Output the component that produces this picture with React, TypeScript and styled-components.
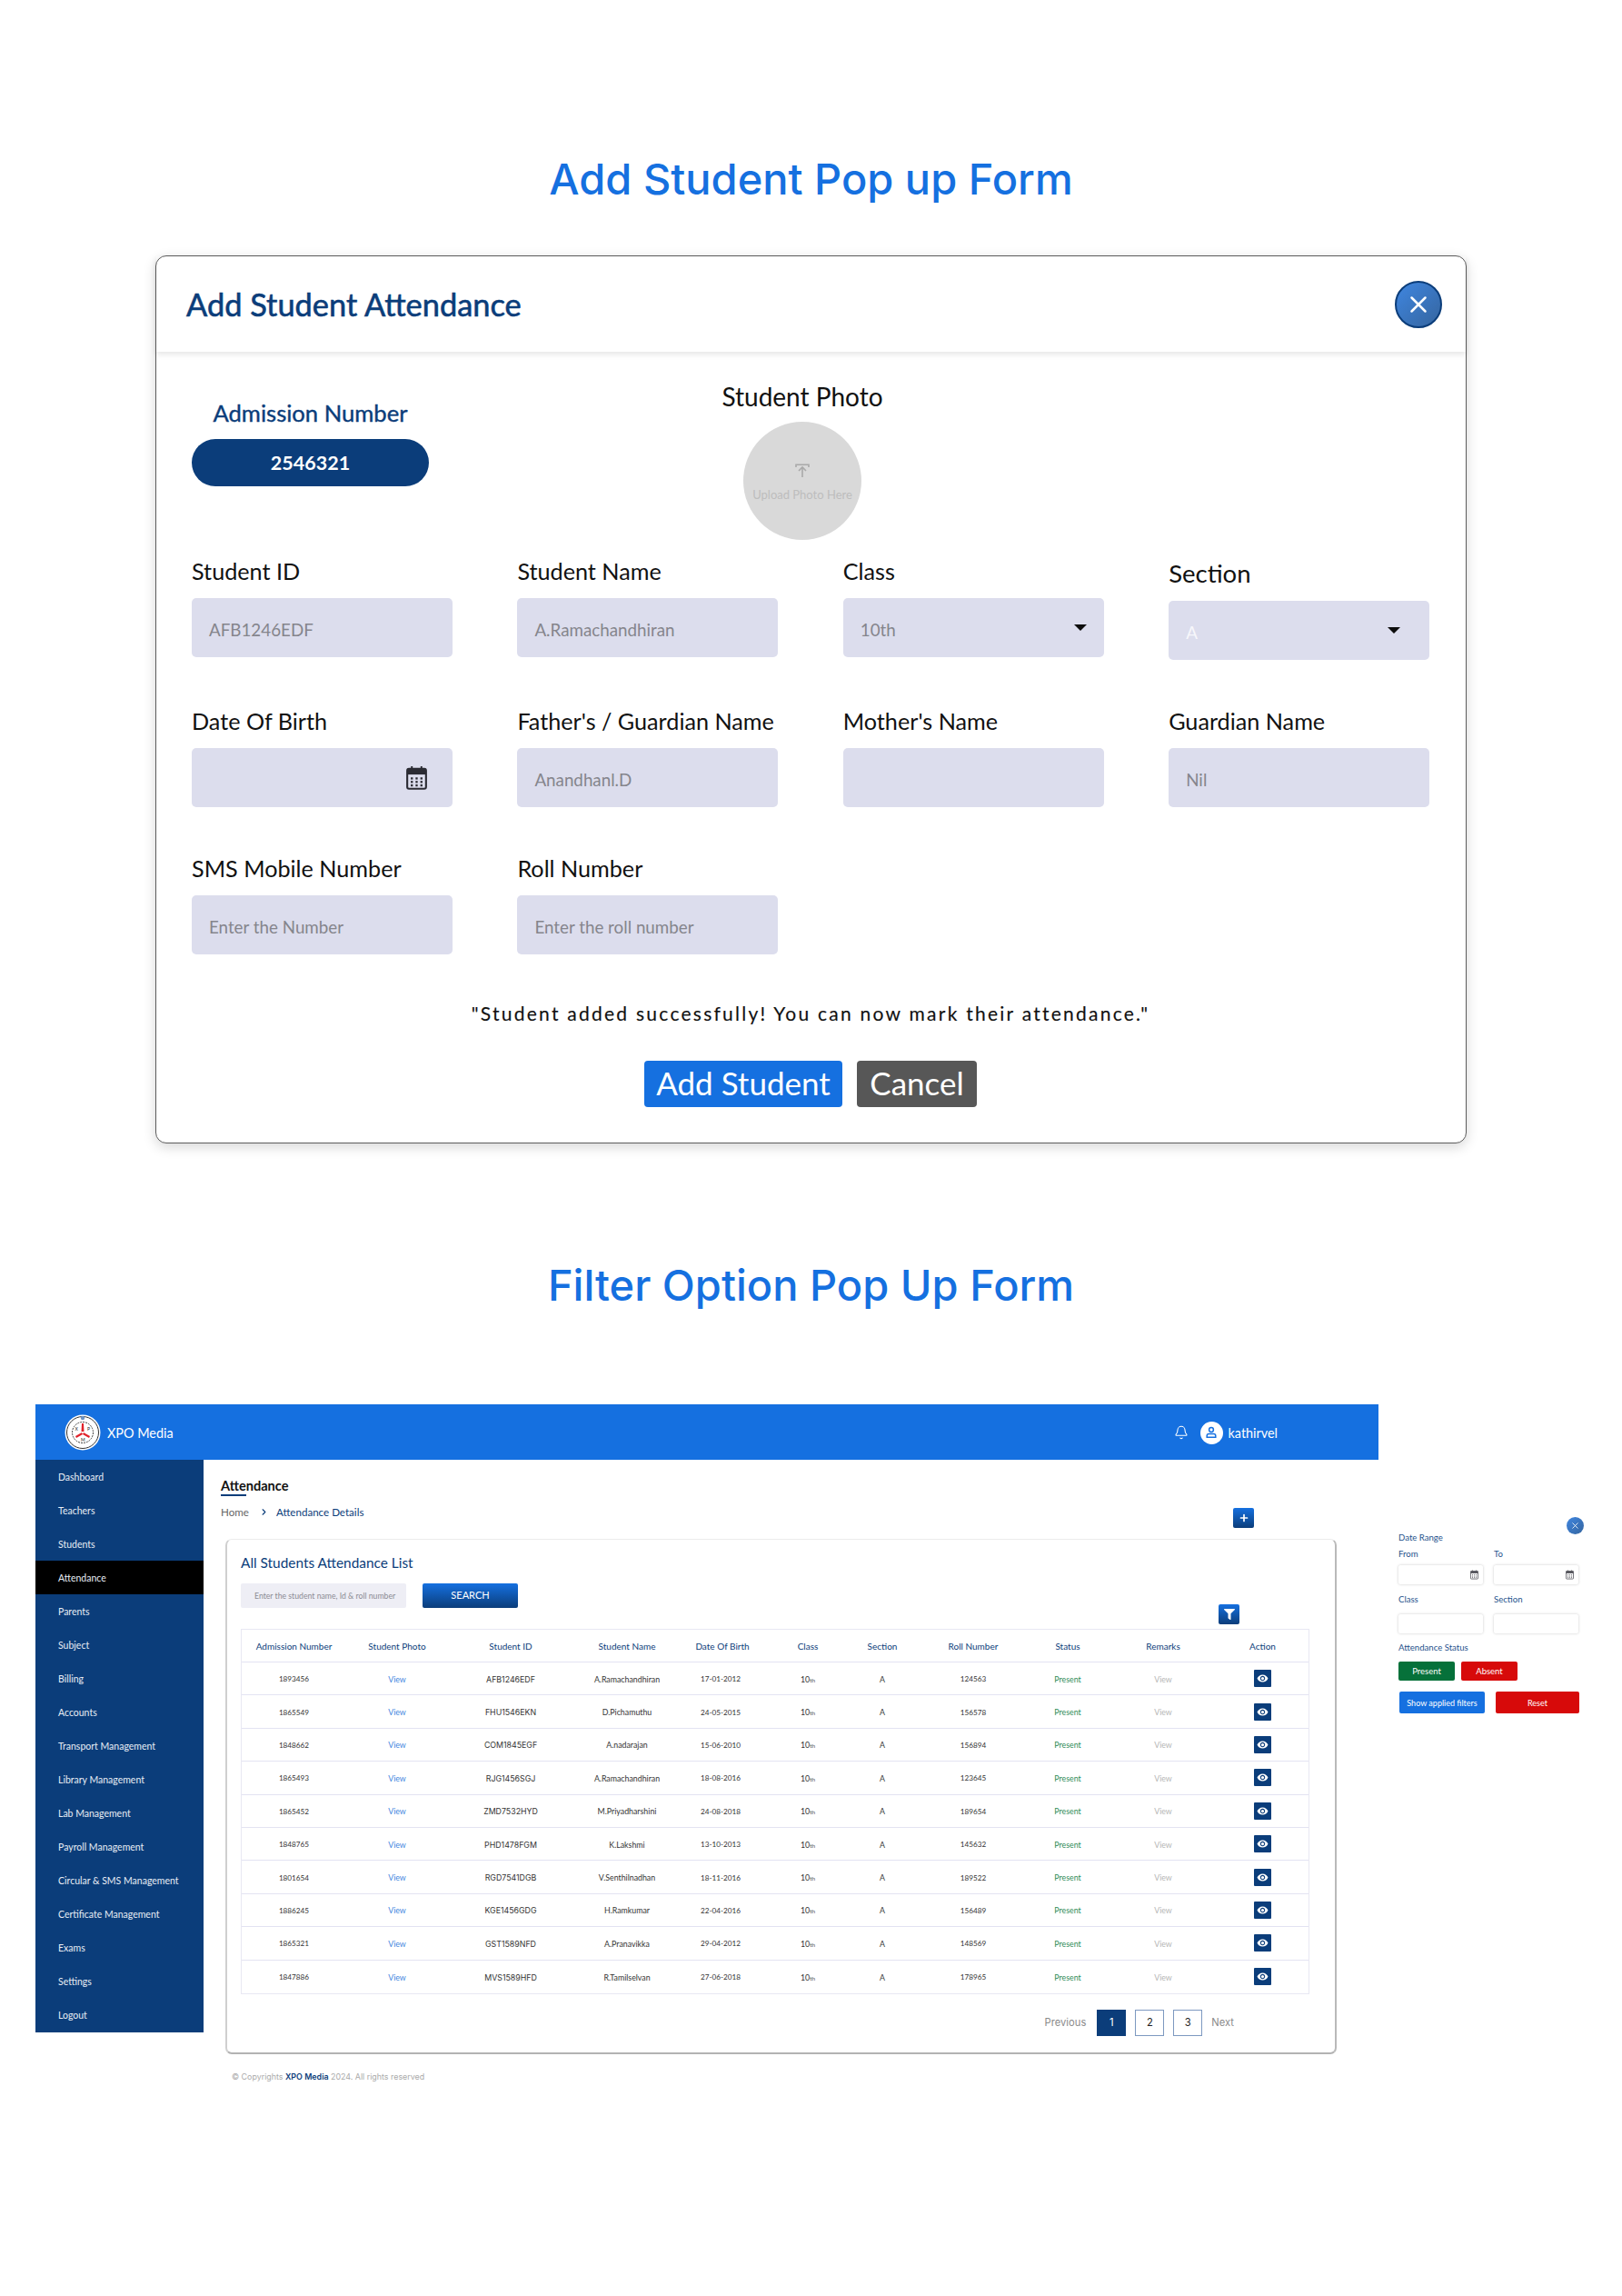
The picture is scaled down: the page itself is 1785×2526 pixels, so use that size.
import React from 'react';
import styled, { createGlobalStyle } from 'styled-components';
import { Bell, ChevronRight, Plus, X } from 'lucide-react';
import { FaFilter } from 'react-icons/fa';
import { MdRemoveRedEye } from 'react-icons/md';

const navy = '#0b3d7a';
const blue = '#1570e0';
const soft = '"Lato", "Open Sans", sans-serif';
const geo = '"Inter", "Open Sans", sans-serif';

const GlobalStyle = createGlobalStyle`
	html, body {
		margin: 0;
		background: #fff;
	}
	* {
		box-sizing: border-box;
	}
`;

const Page = styled.div`
	width: 1785px;
	min-height: 2526px;
	padding-top: 167px;
	font-family: ${soft};
	overflow: hidden;
`;

const SectionTitle = styled.h1<{ $mt?: number }>`
	margin: ${(p) => p.$mt ?? 0}px 0 0;
	height: 60px;
	line-height: 60px;
	text-align: center;
	font-family: ${geo};
	font-size: 47px;
	font-weight: 500;
	color: ${blue};
`;

/* add student modal */
const Modal = styled.section`
	width: 1443px;
	height: 977px;
	margin: 54px 0 0 171px;
	background: #fff;
	border: 1px solid #5c5c5c;
	border-radius: 12px;
	box-shadow: 0 4px 14px rgba(0, 0, 0, 0.16);
`;

const ModalHeader = styled.header`
	height: 105px;
	padding: 0 26px 0 33px;
	display: flex;
	align-items: center;
	justify-content: space-between;
	box-shadow: 0 3px 6px rgba(0, 0, 0, 0.1);
`;

const ModalTitle = styled.h2`
	margin: 0;
	font-size: 34.4px;
	font-weight: 400;
	-webkit-text-stroke: 0.6px ${navy};
	color: ${navy};
`;

const CloseCircle = styled.button<{ $small?: boolean }>`
	width: ${(p) => (p.$small ? 19 : 52)}px;
	height: ${(p) => (p.$small ? 19 : 52)}px;
	padding: 0;
	display: flex;
	align-items: center;
	justify-content: center;
	border-radius: 50%;
	border: ${(p) => (p.$small ? 0 : 2)}px solid ${navy};
	background: linear-gradient(135deg, #3f86e0, #35659f);
	color: #fff;
`;

const ModalBody = styled.div`
	padding: 34px 40px 0 39px;
`;

const TopRow = styled.div`
	display: flex;
	height: 173px;
`;

const AdmissionBlock = styled.div`
	width: 261px;
	padding-top: 17px;
`;

const AdmissionLabel = styled.div`
	height: 32px;
	line-height: 32px;
	text-align: center;
	font-size: 25.6px;
	-webkit-text-stroke: 0.4px ${navy};
	color: ${navy};
`;

const AdmissionPill = styled.div`
	margin-top: 13px;
	height: 52px;
	display: flex;
	align-items: center;
	justify-content: center;
	border-radius: 26px;
	background: ${navy};
	color: #fff;
	font-size: 21.5px;
	font-weight: 700;
`;

const PhotoBlock = styled.div`
	width: 220px;
	margin-left: 301px;
	display: flex;
	flex-direction: column;
	align-items: center;
`;

const PhotoLabel = styled.div`
	height: 32px;
	line-height: 30px;
	font-size: 28px;
	color: #111;
`;

const PhotoCircle = styled.div`
	width: 130px;
	height: 130px;
	margin-top: 11px;
	padding-top: 46px;
	border-radius: 50%;
	background: #d9d9d9;
	display: flex;
	flex-direction: column;
	align-items: center;
	color: #bdbdbd;
	font-size: 13px;
	white-space: nowrap;
`;

const UploadCaption = styled.span`
	margin-top: 10px;
	line-height: 16px;
`;

const FormRow = styled.div<{ $mt?: number }>`
	display: grid;
	grid-template-columns: repeat(4, 287px);
	column-gap: 71.4px;
	margin-top: ${(p) => p.$mt ?? 53}px;
`;

const FieldLabel = styled.label<{ $large?: boolean }>`
	display: block;
	height: ${(p) => (p.$large ? 33 : 30)}px;
	line-height: ${(p) => (p.$large ? 34 : 28)}px;
	margin-bottom: 14px;
	font-size: ${(p) => (p.$large ? 27.5 : 25.2)}px;
	color: #111;
	white-space: nowrap;
`;

const FieldBox = styled.div<{ $light?: boolean; $caretGap?: number }>`
	height: 65px;
	padding: 3px ${(p) => p.$caretGap ?? 19}px 0 19px;
	display: flex;
	align-items: center;
	justify-content: space-between;
	border-radius: 5px;
	background: #dcdded;
	color: ${(p) => (p.$light ? '#f7f7fb' : '#85858c')};
	font-size: 18.8px;
`;

const Caret = styled.span`
	width: 0;
	height: 0;
	margin: -3px 0 0;
	border-left: 7px solid transparent;
	border-right: 7px solid transparent;
	border-top: 7px solid #0d0d0d;
`;

const CalendarSlot = styled.span`
	margin: -3px 9px 0 auto;
	display: flex;
`;

const Message = styled.p`
	margin: 51px 0 0;
	height: 30px;
	line-height: 28px;
	text-align: center;
	font-size: 21px;
	font-weight: 400;
	letter-spacing: 2.25px;
	-webkit-text-stroke: 0.15px #111;
	color: #111;
`;

const ButtonRow = styled.div`
	margin-top: 36px;
	display: flex;
	justify-content: center;
	gap: 16px;
`;

const BigButton = styled.button<{ $width: number; $bg: string }>`
	width: ${(p) => p.$width}px;
	height: 51px;
	padding: 0 0 3px;
	border: 0;
	border-radius: 4px;
	background: ${(p) => p.$bg};
	color: #fff;
	font-family: ${soft};
	font-size: 35px;
`;

/* attendance app shot */
const Shot = styled.div`
	display: flex;
	margin: 101px 0 0 39px;
`;

const AppFrame = styled.div`
	width: 1478px;
	flex: none;
`;

const TopBar = styled.div`
	height: 61px;
	padding: 1px 0 0 32px;
	display: flex;
	align-items: center;
	background: ${blue};
	color: #fff;
`;

const BrandName = styled.span`
	margin-left: 7px;
	font-size: 14.4px;
`;

const TopBarRight = styled.div`
	margin-left: auto;
	margin-right: 111px;
	display: flex;
	align-items: center;
`;

const AvatarCircle = styled.span`
	width: 25px;
	height: 25px;
	margin: 0 6px 0 13px;
	border-radius: 50%;
	background: #fff;
	display: flex;
	align-items: center;
	justify-content: center;
`;

const UserName = styled.span`
	font-size: 14.4px;
`;

const AppBody = styled.div`
	display: flex;
	align-items: flex-start;
`;

const Sidebar = styled.nav`
	width: 185px;
	flex: none;
	padding-bottom: 1px;
	background: ${navy};
`;

const NavItem = styled.div<{ $active?: boolean }>`
	height: 37px;
	padding-left: 25px;
	display: flex;
	align-items: center;
	background: ${(p) => (p.$active ? '#000' : 'transparent')};
	color: #e8edf5;
	font-size: 10.5px;
	white-space: nowrap;
`;

const Main = styled.main`
	flex: 1;
	padding: 20px 0 0 19px;
`;

const PageHead = styled.div`
	display: flex;
	justify-content: space-between;
	padding-right: 137px;
`;

const PageHeading = styled.h3`
	margin: 0;
	height: 18px;
	line-height: 18px;
	font-size: 14.6px;
	font-weight: 700;
	color: #111;
`;

const HeadingMark = styled.div`
	width: 28px;
	height: 2px;
	background: ${navy};
`;

const Breadcrumb = styled.div`
	margin-top: 10px;
	height: 14px;
	display: flex;
	align-items: center;
	font-size: 11.6px;
	color: #666;
`;

const CrumbLink = styled.span`
	color: ${navy};
`;

const CrumbArrow = styled.span`
	display: flex;
	margin: 0 8px 0 11px;
	color: ${navy};
`;

const SquareButton = styled.button<{ $mt?: number }>`
	width: 23px;
	height: 22px;
	margin-top: ${(p) => p.$mt ?? 0}px;
	padding: 0;
	display: flex;
	align-items: center;
	justify-content: center;
	border: 0;
	border-radius: 2px;
	background: linear-gradient(180deg, ${blue}, ${navy});
	color: #fff;
`;

const Card = styled.section`
	width: 1223px;
	height: 567px;
	margin: 12px 0 0 5px;
	padding: 15px 28px 0 15px;
	background: #fff;
	border: 1px solid #ececec;
	border-right: 2px solid #b9b9b9;
	border-bottom: 2px solid #b3b3b3;
	border-left: 2px solid #cfcfcf;
	border-radius: 7px;
`;

const CardTitle = styled.h4`
	margin: 0;
	height: 20px;
	line-height: 20px;
	font-size: 15.4px;
	font-weight: 400;
	color: ${navy};
`;

const Toolbar = styled.div`
	margin-top: 13px;
	height: 45px;
	padding-right: 77px;
	display: flex;
	justify-content: space-between;
	align-items: flex-end;
`;

const SearchGroup = styled.div`
	align-self: flex-start;
	display: flex;
	gap: 18px;
`;

const SearchInput = styled.div`
	width: 182px;
	height: 27px;
	padding-left: 15px;
	display: flex;
	align-items: center;
	border-radius: 2px;
	background: #eeeef5;
	color: #8c8c94;
	font-size: 8.7px;
	white-space: nowrap;
`;

const SearchButton = styled.button`
	width: 105px;
	height: 27px;
	padding: 0 0 2px;
	border: 0;
	border-radius: 2px;
	background: linear-gradient(180deg, ${blue}, ${navy});
	color: #fff;
	font-family: ${soft};
	font-size: 11px;
`;

const Table = styled.div`
	width: 1176px;
	margin-top: 5px;
	border: 1px solid #e8e8f3;
`;

const TableRow = styled.div<{ $head?: boolean }>`
	display: grid;
	grid-template-columns: 115px 112px 138px 118px 92px 96px 68px 132px 76px 134px 85px;
	height: ${(p) => (p.$head ? 36 : 36.4)}px;
	padding-top: ${(p) => (p.$head ? 0 : 1)}px;
	align-items: center;
	border-bottom: 1px solid #e3e3f2;
	&:last-child {
		border-bottom: 0;
	}
`;

const HeadCell = styled.div`
	text-align: center;
	font-size: 10px;
	color: ${navy};
	white-space: nowrap;
`;

const Cell = styled.div<{ $color?: string; $geo?: boolean; $pad?: number; $num?: boolean }>`
	text-align: ${(p) => (p.$pad ? 'left' : 'center')};
	padding-left: ${(p) => p.$pad ?? 0}px;
	font-family: ${(p) => (p.$geo ? geo : soft)};
	font-size: ${(p) => (p.$geo ? 8.8 : p.$num ? 8.2 : 8.8)}px;
	color: ${(p) => p.$color ?? '#333'};
	white-space: nowrap;
`;

const Suffix = styled.span`
	font-size: 6.5px;
	color: #555;
`;

const EyeButton = styled.span`
	width: 19px;
	height: 19px;
	margin: -1px auto 0;
	display: flex;
	align-items: center;
	justify-content: center;
	border-radius: 1px;
	background: ${navy};
	color: #fff;
`;

const Pagination = styled.div`
	margin-top: 17px;
	padding-right: 83px;
	display: flex;
	justify-content: flex-end;
	align-items: center;
	font-family: ${geo};
	font-size: 11.2px;
	color: #8a8a8a;
`;

const PageNumber = styled.span<{ $active?: boolean }>`
	width: 32px;
	height: 29px;
	margin-left: ${(p) => (p.$active ? 12 : 10)}px;
	display: flex;
	align-items: center;
	justify-content: center;
	border: 1px solid ${(p) => (p.$active ? navy : '#7d99c0')};
	background: ${(p) => (p.$active ? navy : '#fff')};
	color: ${(p) => (p.$active ? '#fff' : '#222')};
`;

const NextLabel = styled.span`
	margin-left: 10px;
`;

const Footer = styled.div`
	margin: 18px 0 0 12px;
	height: 14px;
	line-height: 14px;
	font-family: ${geo};
	font-size: 8.9px;
	color: #aaa;
	white-space: nowrap;
`;

const FooterBrand = styled.span`
	font-weight: 600;
	color: ${navy};
`;

/* filter panel */
const FilterPanel = styled.aside`
	width: 199px;
	flex: none;
	margin: 124px 0 0 22px;
	display: flex;
	flex-direction: column;
	font-size: 9.6px;
	line-height: 12px;
	color: #26528c;
`;

const FilterClose = styled.div`
	display: flex;
	justify-content: flex-end;
	margin-right: -5px;
`;

const FilterHeading = styled.div<{ $mt: number; $mb?: number }>`
	height: 12px;
	margin-top: ${(p) => p.$mt}px;
	margin-bottom: ${(p) => p.$mb ?? 0}px;
`;

const FilterGrid = styled.div<{ $mt?: number }>`
	display: grid;
	grid-template-columns: 93px 93px;
	column-gap: 12px;
	margin-top: ${(p) => p.$mt ?? 0}px;
`;

const FilterInput = styled.div<{ $mt?: number }>`
	height: 21px;
	margin-top: ${(p) => p.$mt ?? 6}px;
	padding-right: 5px;
	display: flex;
	align-items: center;
	justify-content: flex-end;
	background: #fff;
	border-radius: 2px;
	box-shadow: 0 0 3px rgba(0, 0, 0, 0.22);
`;

const StatusRow = styled.div`
	display: flex;
	gap: 7px;
`;

const StatusButton = styled.button<{ $bg: string }>`
	width: 62px;
	height: 21px;
	padding: 0;
	border: 0;
	border-radius: 2px;
	background: ${(p) => p.$bg};
	color: #fff;
	font-family: ${soft};
	font-size: 9.5px;
`;

const ActionRow = styled.div`
	display: flex;
	gap: 12px;
	margin: 12px 0 0 1px;
`;

const ActionButton = styled.button<{ $bg: string; $width: number }>`
	width: ${(p) => p.$width}px;
	height: 24px;
	padding: 0;
	border: 0;
	border-radius: 2px;
	background: ${(p) => p.$bg};
	color: #fff;
	font-family: ${soft};
	font-size: 9px;
	white-space: nowrap;
`;

const CalendarIcon: React.FC<{ size: number; color?: string }> = ({ size, color = '#2b2b33' }) => (
	<svg width={size} height={size * 1.17} viewBox="0 0 24 28" fill="none">
		<path d="M6.5 1v4M17.5 1v4" stroke={color} strokeWidth="2" />
		<rect x="1.2" y="4" width="21.6" height="22.8" rx="2" stroke={color} strokeWidth="2.2" />
		<rect x="1.2" y="4" width="21.6" height="6.5" fill={color} />
		{[6.5, 12, 17.5].map((x) =>
			[15, 19, 23].map((y) => <rect key={`${x}-${y}`} x={x - 1.2} y={y - 1.2} width="2.4" height="2.4" fill={color} />)
		)}
	</svg>
);

const UploadIcon = () => (
	<svg width="16" height="16" viewBox="0 0 16 16" fill="none" stroke="#a9a9a9" strokeWidth="1.6">
		<path d="M1 4V1.2h14V4" />
		<path d="M8 15V4.5M4 8l4-4 4 4" />
	</svg>
);

const Seal = () => (
	<svg width="40" height="40" viewBox="0 0 40 40">
		<circle cx="20" cy="20" r="19.5" fill="#fff" />
		<circle cx="20" cy="20" r="17.5" fill="none" stroke="#333" strokeWidth="1" />
		<circle cx="20" cy="20" r="11.5" fill="#fff" stroke="#444" strokeWidth="1" strokeDasharray="2 1" />
		<path d="M19 10h2l.5 9h-3zM21 20l7 4-1 2-7-4zM19 20l-7 4 1 2 7-4z" fill="#e0222a" />
		<circle cx="20" cy="4" r="2.2" fill="#6d93c4" />
		<text x="11.5" y="18" fontSize="5" fontFamily="Lato, sans-serif" fill="#222">X</text>
		<text x="25" y="18" fontSize="5" fontFamily="Lato, sans-serif" fill="#222">P</text>
		<text x="18" y="30" fontSize="5" fontFamily="Lato, sans-serif" fill="#222">M</text>
	</svg>
);

const PersonIcon = () => (
	<svg width="14" height="14" viewBox="0 0 14 14" fill="none" stroke={blue} strokeWidth="1.5">
		<circle cx="7" cy="4" r="2.4" />
		<path d="M2.2 12.2v-1.4c0-1.3 1-2.2 2.2-2.2h5.2c1.2 0 2.2.9 2.2 2.2v1.4z" />
	</svg>
);

const navItems = [
	'Dashboard',
	'Teachers',
	'Students',
	'Attendance',
	'Parents',
	'Subject',
	'Billing',
	'Accounts',
	'Transport Management',
	'Library Management',
	'Lab Management',
	'Payroll Management',
	'Circular & SMS Management',
	'Certificate Management',
	'Exams',
	'Settings',
	'Logout',
];

const columns = [
	'Admission Number',
	'Student Photo',
	'Student ID',
	'Student Name',
	'Date Of Birth',
	'Class',
	'Section',
	'Roll Number',
	'Status',
	'Remarks',
	'Action',
];

const students = [
	['1893456', 'AFB1246EDF', 'A.Ramachandhiran', '17-01-2012', '124563'],
	['1865549', 'FHU1546EKN', 'D.Pichamuthu', '24-05-2015', '156578'],
	['1848662', 'COM1845EGF', 'A.nadarajan', '15-06-2010', '156894'],
	['1865493', 'RJG1456SGJ', 'A.Ramachandhiran', '18-08-2016', '123645'],
	['1865452', 'ZMD7532HYD', 'M.Priyadharshini', '24-08-2018', '189654'],
	['1848765', 'PHD1478FGM', 'K.Lakshmi', '13-10-2013', '145632'],
	['1801654', 'RGD7541DGB', 'V.Senthilnadhan', '18-11-2016', '189522'],
	['1886245', 'KGE1456GDG', 'H.Ramkumar', '22-04-2016', '156489'],
	['1865321', 'GST1589NFD', 'A.Pranavikka', '29-04-2012', '148569'],
	['1847886', 'MVS1589HFD', 'R.Tamilselvan', '27-06-2018', '178965'],
];

const App: React.FC = () => (
	<Page>
		<GlobalStyle />
		<SectionTitle>Add Student Pop up Form</SectionTitle>
		<Modal>
			<ModalHeader>
				<ModalTitle>Add Student Attendance</ModalTitle>
				<CloseCircle>
					<X size={30} strokeWidth={2} />
				</CloseCircle>
			</ModalHeader>
			<ModalBody>
				<TopRow>
					<AdmissionBlock>
						<AdmissionLabel>Admission Number</AdmissionLabel>
						<AdmissionPill>2546321</AdmissionPill>
					</AdmissionBlock>
					<PhotoBlock>
						<PhotoLabel>Student Photo</PhotoLabel>
						<PhotoCircle>
							<UploadIcon />
							<UploadCaption>Upload Photo Here</UploadCaption>
						</PhotoCircle>
					</PhotoBlock>
				</TopRow>
				<FormRow $mt={20}>
					<div>
						<FieldLabel>Student ID</FieldLabel>
						<FieldBox>AFB1246EDF</FieldBox>
					</div>
					<div>
						<FieldLabel>Student Name</FieldLabel>
						<FieldBox>A.Ramachandhiran</FieldBox>
					</div>
					<div>
						<FieldLabel>Class</FieldLabel>
						<FieldBox>
							10th
							<Caret />
						</FieldBox>
					</div>
					<div>
						<FieldLabel $large>Section</FieldLabel>
						<FieldBox $light $caretGap={32}>
							A
							<Caret />
						</FieldBox>
					</div>
				</FormRow>
				<FormRow>
					<div>
						<FieldLabel>Date Of Birth</FieldLabel>
						<FieldBox>
							<CalendarSlot>
								<CalendarIcon size={23} />
							</CalendarSlot>
						</FieldBox>
					</div>
					<div>
						<FieldLabel>Father's / Guardian Name</FieldLabel>
						<FieldBox>Anandhanl.D</FieldBox>
					</div>
					<div>
						<FieldLabel>Mother's Name</FieldLabel>
						<FieldBox />
					</div>
					<div>
						<FieldLabel>Guardian Name</FieldLabel>
						<FieldBox>Nil</FieldBox>
					</div>
				</FormRow>
				<FormRow>
					<div>
						<FieldLabel>SMS Mobile Number</FieldLabel>
						<FieldBox>Enter the Number</FieldBox>
					</div>
					<div>
						<FieldLabel>Roll Number</FieldLabel>
						<FieldBox>Enter the roll number</FieldBox>
					</div>
				</FormRow>
				<Message>"Student added successfully! You can now mark their attendance."</Message>
				<ButtonRow>
					<BigButton $width={218} $bg={blue}>Add Student</BigButton>
					<BigButton $width={132} $bg="#575757">Cancel</BigButton>
				</ButtonRow>
			</ModalBody>
		</Modal>
		<SectionTitle $mt={126}>Filter Option Pop Up Form</SectionTitle>
		<Shot>
			<AppFrame>
				<TopBar>
					<Seal />
					<BrandName>XPO Media</BrandName>
					<TopBarRight>
						<Bell size={16} strokeWidth={1.6} />
						<AvatarCircle>
							<PersonIcon />
						</AvatarCircle>
						<UserName>kathirvel</UserName>
					</TopBarRight>
				</TopBar>
				<AppBody>
					<Sidebar>
						{navItems.map((item) => (
							<NavItem key={item} $active={item === 'Attendance'}>
								{item}
							</NavItem>
						))}
					</Sidebar>
					<Main>
						<PageHead>
							<div>
								<PageHeading>Attendance</PageHeading>
								<HeadingMark />
								<Breadcrumb>
									Home
									<CrumbArrow>
										<ChevronRight size={11} strokeWidth={2.4} />
									</CrumbArrow>
									<CrumbLink>Attendance Details</CrumbLink>
								</Breadcrumb>
							</div>
							<SquareButton $mt={33}>
								<Plus size={12} strokeWidth={3.4} />
							</SquareButton>
						</PageHead>
						<Card>
							<CardTitle>All Students Attendance List</CardTitle>
							<Toolbar>
								<SearchGroup>
									<SearchInput>Enter the student name, Id &amp; roll number</SearchInput>
									<SearchButton>SEARCH</SearchButton>
								</SearchGroup>
								<SquareButton>
									<FaFilter size={12} />
								</SquareButton>
							</Toolbar>
							<Table>
								<TableRow $head>
									{columns.map((col) => (
										<HeadCell key={col}>{col}</HeadCell>
									))}
								</TableRow>
								{students.map(([adm, id, name, dob, roll]) => (
									<TableRow key={adm}>
										<Cell $num>{adm}</Cell>
										<Cell $color="#3f86e0">View</Cell>
										<Cell $geo>{id}</Cell>
										<Cell>{name}</Cell>
										<Cell $pad={22} $num>{dob}</Cell>
										<Cell>
											10<Suffix>th</Suffix>
										</Cell>
										<Cell>A</Cell>
										<Cell $num>{roll}</Cell>
										<Cell $color="#2e8b57">Present</Cell>
										<Cell $color="#b5b5b5">View</Cell>
										<EyeButton>
											<MdRemoveRedEye size={13} />
										</EyeButton>
									</TableRow>
								))}
							</Table>
							<Pagination>
								Previous
								<PageNumber $active>1</PageNumber>
								<PageNumber>2</PageNumber>
								<PageNumber>3</PageNumber>
								<NextLabel>Next</NextLabel>
							</Pagination>
						</Card>
						<Footer>
							© Copyrights <FooterBrand>XPO Media</FooterBrand> 2024. All rights reserved
						</Footer>
					</Main>
				</AppBody>
			</AppFrame>
			<FilterPanel>
				<FilterClose>
					<CloseCircle $small>
						<X size={11} strokeWidth={1.8} />
					</CloseCircle>
				</FilterClose>
				<FilterHeading $mt={-2}>Date Range</FilterHeading>
				<FilterGrid $mt={6}>
					<div>
						From
						<FilterInput>
							<CalendarIcon size={9} color="#55555c" />
						</FilterInput>
					</div>
					<div>
						To
						<FilterInput>
							<CalendarIcon size={9} color="#55555c" />
						</FilterInput>
					</div>
				</FilterGrid>
				<FilterGrid $mt={11}>
					<div>
						Class
						<FilterInput $mt={10} />
					</div>
					<div>
						Section
						<FilterInput $mt={10} />
					</div>
				</FilterGrid>
				<FilterHeading $mt={10} $mb={9}>Attendance Status</FilterHeading>
				<StatusRow>
					<StatusButton $bg="#06713a">Present</StatusButton>
					<StatusButton $bg="#d70a0a">Absent</StatusButton>
				</StatusRow>
				<ActionRow>
					<ActionButton $bg={blue} $width={94}>Show applied filters</ActionButton>
					<ActionButton $bg="#d70a0a" $width={92}>Reset</ActionButton>
				</ActionRow>
			</FilterPanel>
		</Shot>
	</Page>
);

export default App;
